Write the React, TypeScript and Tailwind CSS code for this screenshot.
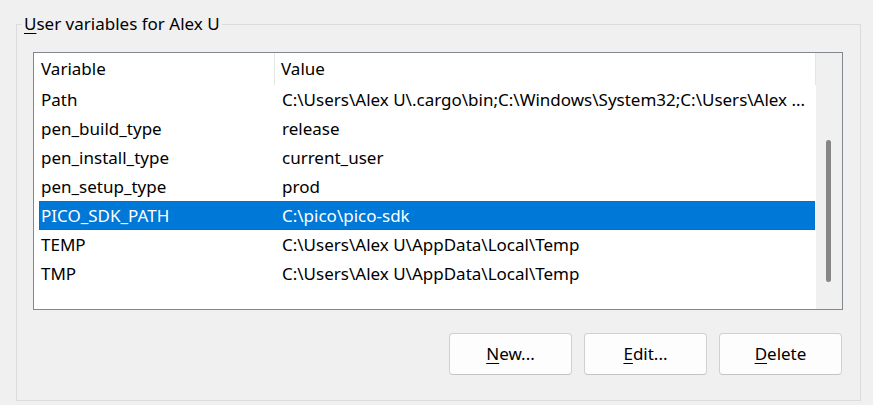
const rows = [
  { name: 'Path', value: 'C:\\Users\\Alex U\\.cargo\\bin;C:\\Windows\\System32;C:\\Users\\Alex ...' },
  { name: 'pen_build_type', value: 'release' },
  { name: 'pen_install_type', value: 'current_user' },
  { name: 'pen_setup_type', value: 'prod' },
  { name: 'PICO_SDK_PATH', value: 'C:\\pico\\pico-sdk', selected: true },
  { name: 'TEMP', value: 'C:\\Users\\Alex U\\AppData\\Local\\Temp' },
  { name: 'TMP', value: 'C:\\Users\\Alex U\\AppData\\Local\\Temp' },
];

const WinButton = ({ hotkey, rest }: { hotkey: string; rest: string }) => (
  <button className="w-[123px] h-[42px] rounded-[4px] border border-[#d0d0d0] border-b-[#c4c4c4] bg-[#fdfdfd] text-[17px] text-black">
    <span className="underline underline-offset-[3px] decoration-1">{hotkey}</span>
    {rest}
  </button>
);

export default function App() {
  return (
    <div className="w-[873px] h-[405px] bg-[#f0f0f0] pt-[13px] pl-[16px] font-['Noto_Sans',sans-serif] text-black overflow-hidden">
      <fieldset className="w-[845px] h-[388px] border border-[#dcdcdc] p-0 m-0">
        <legend className="ml-[5px] px-[2px] text-[17px] leading-[22px]">
          <span className="underline underline-offset-[3px] decoration-1">U</span>ser variables for Alex U
        </legend>

        <div className="ml-[16px] mt-[17px] w-[810px] h-[258px] border border-[#828790] bg-white flex">
          <div className="flex-1 flex flex-col">
            {/* header */}
            <div className="flex h-[32px] items-center text-[17px]">
              <div className="w-[241px] h-full pl-[7px] flex items-center border-r border-[#e5e5e5]">Variable</div>
              <div className="flex-1 h-full pl-[6px] flex items-center border-r border-[#e5e5e5]">Value</div>
            </div>

            <div className="pl-[5px] pr-[1px]">
              {rows.map((r) => (
                <div
                  key={r.name}
                  className={
                    r.selected
                      ? 'flex h-[29px] items-center text-[17px] bg-[#0078d7] text-white outline outline-1 outline-dotted outline-[#3a5f85] -outline-offset-1'
                      : 'flex h-[29px] items-center text-[17px]'
                  }
                >
                  <div className="w-[237px] pl-[2px] whitespace-nowrap">{r.name}</div>
                  <div className="flex-1 pl-[6px] whitespace-nowrap overflow-hidden">{r.value}</div>
                </div>
              ))}
            </div>
          </div>

          {/* scrollbar */}
          <div className="w-[26px] bg-[#f0f0f0] pt-[87px]">
            <div className="ml-[10px] w-[5px] h-[142px] rounded-full bg-[#868686]" />
          </div>
        </div>

        <div className="mt-[23px] ml-[432px] flex gap-[12px]">
          <WinButton hotkey="N" rest="ew..." />
          <WinButton hotkey="E" rest="dit..." />
          <WinButton hotkey="D" rest="elete" />
        </div>
      </fieldset>
    </div>
  );
}
